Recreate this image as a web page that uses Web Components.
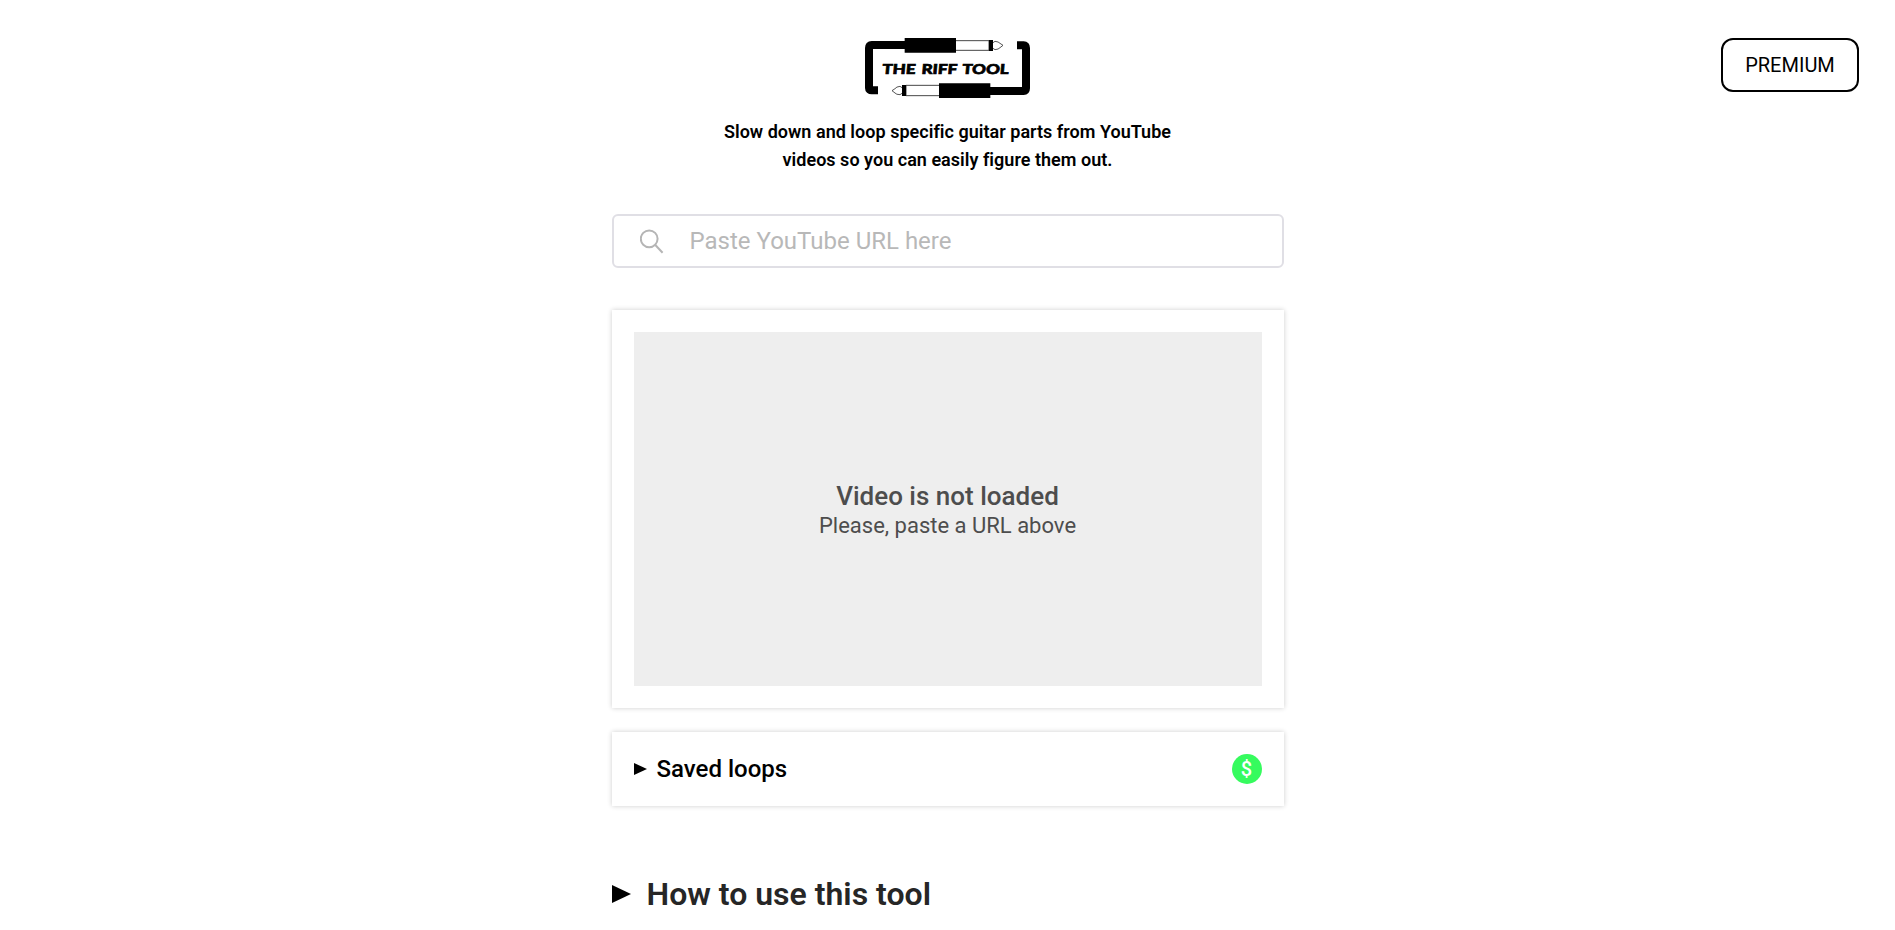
<!DOCTYPE html>
<html lang="en">
<head>
<meta charset="utf-8">
<title>The Riff Tool</title>
<style>
html,body{margin:0;background:#fff;height:930px;overflow:hidden}
body{font-family:Roboto,"Liberation Sans",sans-serif;color:#000}
</style>
</head>
<body>
<riff-app></riff-app>
<script>
const define = (name, html) => {
  const t = document.createElement('template');
  t.innerHTML = html;
  customElements.define(name, class extends HTMLElement {
    constructor() {
      super();
      this.attachShadow({mode: 'open'}).append(t.content.cloneNode(true));
    }
  });
};

define('riff-logo', `
<style>:host{display:block;width:165px;height:60px}svg{display:block}text{word-spacing:5px}</style>
<svg width="165" height="60" viewBox="30 24 495 180" role="img">
  <path d="M150 45H50Q42 45 42 54V174Q42 181 50 181H69" fill="none" stroke="#000" stroke-width="24"/>
  <path d="M405 183H506Q513 183 513 175V54Q513 46 506 46H486" fill="none" stroke="#000" stroke-width="24"/>
  <path d="M149 24H303V68H149zM252 160H406V204H252z"/>
  <path d="M303 32H402V61H303M252 166H153V197H252" fill="none" stroke="#222" stroke-width="2.5"/>
  <path d="M402 30H414V63H402zM141 165H153V198H141z"/>
  <path d="M414 38L420 34Q431 35 435 40L444 46L435 53Q431 58 420 59L414 55M141 173L135 169Q124 170 120 176L111 182L120 189Q124 194 135 194L141 190" fill="none" stroke="#333" stroke-width="2.5"/>
  <g transform="translate(81 132) skewX(-5)"><text textLength="379" lengthAdjust="spacingAndGlyphs" font-family="Lato,sans-serif" font-size="41" font-weight="900" stroke="#000" stroke-width="2">THE RIFF TOOL</text></g>
</svg>`);

define('premium-button', `
<style>:host{display:block}
button{box-sizing:border-box;width:138px;height:54px;padding:0;border:2px solid #000;border-radius:12px;background:#fff;color:#000;font:450 20px/24px Roboto,sans-serif;display:block}</style>
<button><slot></slot></button>`);

define('site-header', `
<style>:host{display:grid;grid-template-columns:1fr 672px 1fr;align-items:start;padding:38px 36px 0}
.brand{grid-column:2;display:flex;flex-direction:column;align-items:center}
p{margin:20px 0 0;width:460px;text-align:center;font-size:18px;line-height:28px;font-weight:600;letter-spacing:.025px}
premium-button{justify-self:end}</style>
<div class="brand"><riff-logo></riff-logo><p><slot></slot></p></div>
<premium-button>PREMIUM</premium-button>`);

define('url-search', `
<style>:host{box-sizing:border-box;display:flex;align-items:center;height:54px;border:2px solid #e0dfe5;border-radius:6px;padding-left:26px;color:#b8b8b8;font-size:24px;line-height:28px}
svg{width:24px;height:25px;margin-right:26px}</style>
<svg viewBox="0 0 24 25" fill="none" stroke="#b5b5b5" stroke-width="2"><circle cx="9.2" cy="9.8" r="8.4"/><path d="M15.1 15.8L22.6 23.8"/></svg>
<span><slot></slot></span>`);

define('soft-card', `
<style>:host{display:block;box-sizing:border-box;padding:22px;background:#fff;box-shadow:0 0 5px rgba(0,0,0,.2)}</style><slot></slot>`);

define('video-placeholder', `
<style>:host{display:flex;box-sizing:border-box;height:354px;padding-top:2px;background:#eee;color:#4d4d4d;flex-direction:column;align-items:center;justify-content:center;text-align:center}
h2{margin:0;font-size:26px;line-height:31px;font-weight:500}p{margin:0;font-size:22px;line-height:28px}</style>
<h2><slot name="title"></slot></h2><p><slot></slot></p>`);

define('saved-loops', `
<style>:host{display:flex;align-items:center;height:30px;font-size:24px;line-height:30px;font-weight:480}
svg{width:13px;height:12px;margin-right:10px}
i{margin-left:auto;width:30px;height:30px;border-radius:50%;background:#36fb5e;color:#fff;font-style:normal;font-size:20px;line-height:30px;text-align:center;font-weight:500}</style>
<svg viewBox="0 0 13 12"><path d="M0 0L13 6L0 12z"/></svg><span><slot></slot></span><i>$</i>`);

define('how-to', `
<style>:host{display:flex;align-items:center;height:38px;color:#262626}
svg{width:19px;height:18px;margin-right:16px;fill:#000}
h1{margin:0;font-size:32px;line-height:38px;font-weight:600}</style>
<svg viewBox="0 0 19 18"><path d="M0 0L19 9L0 18z"/></svg><h1><slot></slot></h1>`);

define('riff-app', `
<style>:host{display:block}
main{width:672px;margin:40px auto 0;display:flex;flex-direction:column}
.video{margin-top:42px}.loops{margin-top:24px}how-to{margin-top:69px}</style>
<site-header>Slow down and loop specific guitar parts from YouTube videos so you can easily figure them out.</site-header>
<main>
<url-search>Paste YouTube URL here</url-search>
<soft-card class="video"><video-placeholder><span slot="title">Video is not loaded</span>Please, paste a URL above</video-placeholder></soft-card>
<soft-card class="loops"><saved-loops>Saved loops</saved-loops></soft-card>
<how-to>How to use this tool</how-to>
</main>`);
</script>
</body>
</html>
